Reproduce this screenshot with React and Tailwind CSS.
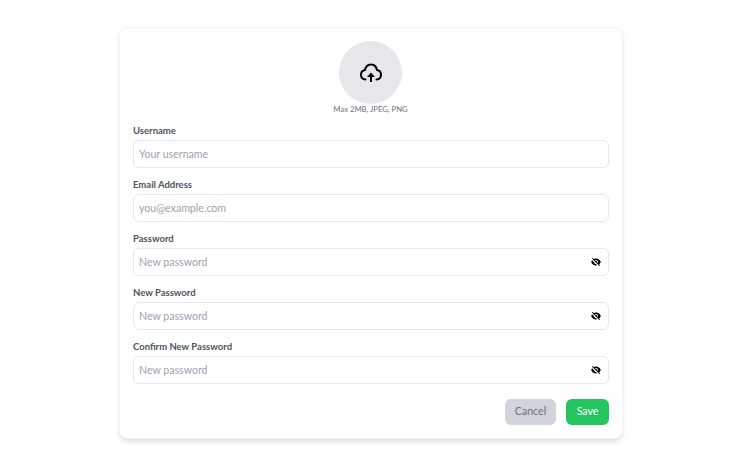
import React from 'react'
import { HiEyeOff } from 'react-icons/hi'

const fields = [
    { label: 'Username', placeholder: 'Your username' },
    { label: 'Email Address', placeholder: 'you@example.com' },
    { label: 'Password', placeholder: 'New password', eye: true },
    { label: 'New Password', placeholder: 'New password', eye: true },
    { label: 'Confirm New Password', placeholder: 'New password', eye: true },
]

const UploadIcon = () => (
    <svg viewBox="0 0 24 24" className="w-[24px] h-[24px] text-black" fill="none" stroke="currentColor" strokeWidth="2" strokeLinecap="round" strokeLinejoin="round">
        <path d="M6.5 18.5C3.9 18.2 2 16.2 2 13.7c0-2.4 1.700-4.300 4-4.700C6.700 5.600 9.100 3.500 12 3.500S17.300 5.600 18 9c2.300.4 4 2.300 4 4.700 0 2.500-1.900 4.500-4.500 4.800" />
        <path d="M12 21v-6.500" strokeLinecap="butt" />
        <path d="M12 11.500l4 4.500H8z" fill="currentColor" stroke="none" />
    </svg>
)

const App = () => {
    return (
        <div className="min-h-[469px] bg-white flex justify-center pt-[27px] pr-[8px]" style={{ fontFamily: 'Lato, sans-serif' }}>
            <div className="w-[504px] h-[412px] bg-white rounded-lg border border-gray-100 shadow-md px-[13px] pt-[13px]">
                <div className="flex flex-col items-center pr-[1px]">
                    <div className="w-[63px] h-[63px] rounded-full bg-[#e5e7eb] flex items-center justify-center">
                        <UploadIcon />
                    </div>
                    <p className="text-[7.7px] leading-3 text-[#6b7280] mt-[-1px]">Max 2MB, JPEG, PNG</p>
                </div>
                <div className="mt-[10px] flex flex-col gap-[11px]">
                    {fields.map((f) => (
                        <div key={f.label}>
                            <label className="block text-[9.5px] leading-3 font-bold text-[#4b5563] mb-[3px]">{f.label}</label>
                            <div className="h-7 border border-[#e5e7eb] rounded-md flex items-center justify-between pl-[5px] pr-[7px]">
                                <span className="text-[10.6px] text-[#9ca3af] pt-[1px]">{f.placeholder}</span>
                                {f.eye && <HiEyeOff className="w-[10px] h-[10px] text-black" />}
                            </div>
                        </div>
                    ))}
                </div>
                <div className="flex justify-end gap-[10px] mt-[15px]">
                    <button className="w-[51px] h-[26px] rounded-md bg-[#d1d5db] text-[10.6px] text-[#6b7280]">Cancel</button>
                    <button className="w-[43px] h-[26px] rounded-md bg-[#22c55e] text-[10.6px] text-white">Save</button>
                </div>
            </div>
        </div>
    )
}

export default App
